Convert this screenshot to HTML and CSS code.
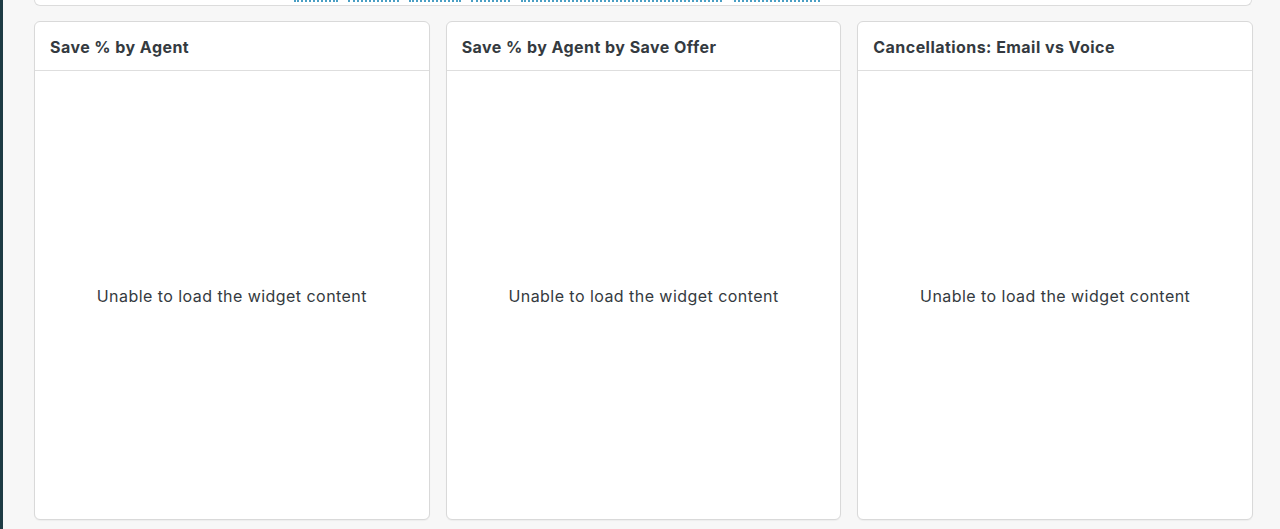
FILE: index.html
```html
<!DOCTYPE html>
<html>
<head>
<meta charset="utf-8">
<link rel="stylesheet" href="styles.css">
</head>
<body>
<div class="page">
  <div class="rail"></div>
  <main class="content">
    <div class="top-card">
      <span class="link l1"></span>
      <span class="link l2"></span>
      <span class="link l3"></span>
      <span class="link l4"></span>
      <span class="link l5"></span>
      <span class="link l6"></span>
    </div>
    <section class="grid">
      <div class="card">
        <div class="card-header">Save % by Agent</div>
        <div class="card-body">Unable to load the widget content</div>
      </div>
      <div class="card">
        <div class="card-header">Save % by Agent by Save Offer</div>
        <div class="card-body">Unable to load the widget content</div>
      </div>
      <div class="card">
        <div class="card-header">Cancellations: Email vs Voice</div>
        <div class="card-body">Unable to load the widget content</div>
      </div>
    </section>
  </main>
</div>
</body>
</html>
```
FILE: styles.css
```css
* { box-sizing: border-box; }
html, body { margin: 0; padding: 0; height: 100%; }
body {
  background: #f7f7f7;
  font-family: "Inter", "Liberation Sans", sans-serif;
  color: #343a40;
}
.page { display: flex; height: 529px; overflow: hidden; }
.rail { width: 3px; background: #1d3b44; flex: none; }
.content {
  flex: 1;
  padding: 0 27px 0 31px;
  display: flex;
  flex-direction: column;
}
.top-card {
  height: 6px;
  background: #fff;
  border: 1px solid #dcdcdc;
  border-top: none;
  border-radius: 0 0 6px 6px;
  margin-right: 1px;
  display: flex;
  padding-left: 259px;
}
.link {
  height: 2px;
  border-top: 2px dotted #4a9fc4;
  margin-right: 10px;
}
.l1 { width: 44px; }
.l2 { width: 51px; }
.l3 { width: 52px; }
.l4 { width: 39px; margin-right: 11px; }
.l5 { width: 201px; margin-right: 12px; }
.l6 { width: 86px; }
.grid {
  margin-top: 15px;
  display: grid;
  grid-template-columns: repeat(3, 1fr);
  gap: 16px;
  height: 499px;
}
.card {
  background: #fff;
  border: 1px solid #d9d9d9;
  border-radius: 6px;
  display: flex;
  flex-direction: column;
  box-shadow: 0 1px 1px rgba(0,0,0,0.04);
}
.card-header {
  height: 49px;
  border-bottom: 1px solid #dedede;
  padding: 2px 15px 0;
  display: flex;
  align-items: center;
  font-size: 16px;
  font-weight: 700;
  letter-spacing: 0.45px;
  color: #343a40;
}
.card-body {
  flex: 1;
  display: flex;
  align-items: center;
  justify-content: center;
  font-size: 16px;
  letter-spacing: 0.45px;
  color: #343a40;
  padding-top: 2px;
}
```
